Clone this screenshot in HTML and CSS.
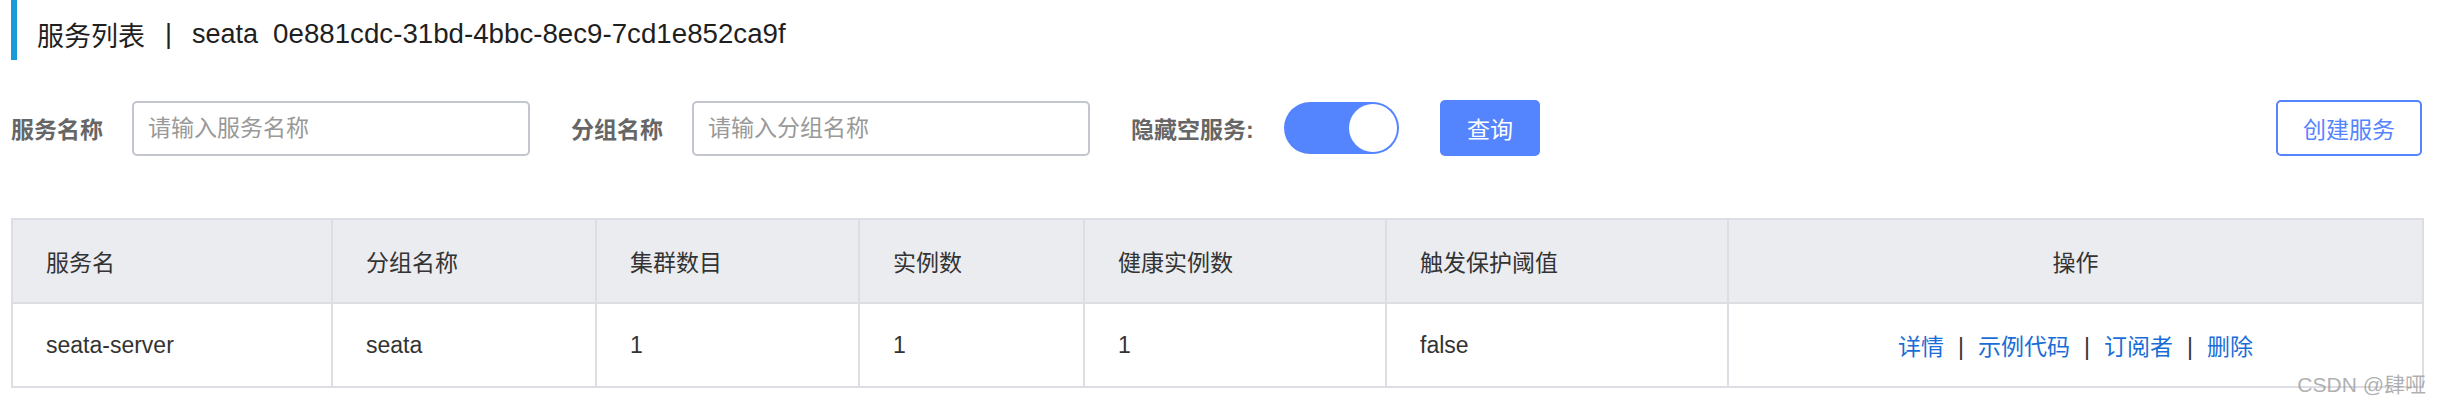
FILE: index.html
```html
<!DOCTYPE html>
<html lang="zh-CN">
<head>
    <meta charset="UTF-8">
    <title>服务列表</title>
    <link rel="stylesheet" href="styles.css">
</head>
<body>
    <div class="page">
        <div class="page-title">
            <span>服务列表</span>
            <span class="title-sep">|</span>
            <span>seata</span>
            <span class="title-ns">0e881cdc-31bd-4bbc-8ec9-7cd1e852ca9f</span>
        </div>

        <div class="search-bar">
            <div class="form-item">
                <label>服务名称</label>
                <input class="text-input" type="text" placeholder="请输入服务名称">
            </div>
            <div class="form-item">
                <label>分组名称</label>
                <input class="text-input" type="text" placeholder="请输入分组名称">
            </div>
            <div class="form-item">
                <label class="label-wide">隐藏空服务:</label>
                <span class="switch on"><span class="knob"></span></span>
            </div>
            <button class="btn btn-primary">查询</button>
            <button class="btn btn-outline btn-create">创建服务</button>
        </div>

        <table class="service-table">
            <colgroup>
                <col style="width:320px">
                <col style="width:264px">
                <col style="width:263px">
                <col style="width:225px">
                <col style="width:302px">
                <col style="width:342px">
                <col style="width:695px">
            </colgroup>
            <thead>
                <tr>
                    <th>服务名</th>
                    <th>分组名称</th>
                    <th>集群数目</th>
                    <th>实例数</th>
                    <th>健康实例数</th>
                    <th>触发保护阈值</th>
                    <th class="center">操作</th>
                </tr>
            </thead>
            <tbody>
                <tr>
                    <td>seata-server</td>
                    <td>seata</td>
                    <td>1</td>
                    <td>1</td>
                    <td>1</td>
                    <td>false</td>
                    <td class="center">
                        <a href="#">详情</a><span class="op-sep">|</span><a href="#">示例代码</a><span class="op-sep">|</span><a href="#">订阅者</a><span class="op-sep">|</span><a href="#">删除</a>
                    </td>
                </tr>
            </tbody>
        </table>

        <div class="watermark">CSDN @肆哑</div>
    </div>
</body>
</html>
```

FILE: styles.css
```css
body {
    margin: 0;
    padding: 0;
    background: #fff;
    font-family: "Liberation Sans", "Noto Sans CJK SC", sans-serif;
    color: #333;
}
.page {
    position: relative;
    width: 2411px;
    padding: 0 18px 0 11px;
    height: 400px;
}

/* title */
.page-title {
    height: 60px;
    border-left: 6px solid #1a9ad6;
    padding-left: 20px;
    padding-top: 8px;
    box-sizing: border-box;
    display: flex;
    align-items: center;
    font-size: 27px;
    color: #1f1f1f;
}
.title-sep {
    margin: 0 20px;
}
.title-ns {
    margin-left: 15px;
    font-size: 27.7px;
}

/* search bar */
.search-bar {
    display: flex;
    align-items: center;
    margin-top: 40px;
    height: 56px;
}
.form-item {
    display: flex;
    align-items: center;
    gap: 25px;
    margin-right: 41px;
}
.form-item label {
    font-size: 23px;
    font-weight: bold;
    color: #666;
    min-width: 96px;
}
.form-item .label-wide {
    min-width: 128px;
}
.text-input {
    width: 398px;
    height: 55px;
    box-sizing: border-box;
    border: 2px solid #c4c6cf;
    border-radius: 5px;
    padding: 0 14px;
    font-family: inherit;
    font-size: 23px;
    color: #333;
    outline: none;
}
.text-input::placeholder {
    color: #999;
}
.switch {
    display: inline-block;
    width: 115px;
    height: 52px;
    border-radius: 26px;
    background: #5584ff;
    position: relative;
    box-sizing: border-box;
}
.switch .knob {
    position: absolute;
    right: 2px;
    top: 2px;
    width: 48px;
    height: 48px;
    border-radius: 50%;
    background: #fff;
}
.btn {
    height: 56px;
    box-sizing: border-box;
    border-radius: 5px;
    font-family: inherit;
    font-size: 23px;
    cursor: pointer;
}
.btn-primary {
    width: 100px;
    border: none;
    background: #5584ff;
    color: #fff;
}
.btn-outline {
    background: #fff;
    border: 2px solid #5584ff;
    color: #5584ff;
}
.btn-create {
    width: 146px;
    margin-left: auto;
}

/* table */
.service-table {
    margin-top: 62px;
    width: 2411px;
    table-layout: fixed;
    border-collapse: collapse;
    font-size: 23px;
}
.service-table th,
.service-table td {
    border: 2px solid #dcdee3;
    padding: 0 0 0 33px;
    text-align: left;
    font-weight: normal;
    color: #333;
    height: 82px;
}
.service-table th {
    background: #ebecf0;
}
.service-table .center {
    text-align: center;
    padding-left: 0;
}
.service-table a {
    color: #1a6dd6;
    text-decoration: none;
}
.op-sep {
    margin: 0 14px;
    color: #333;
}

.watermark {
    position: absolute;
    right: 14px;
    top: 368px;
    font-size: 21px;
    color: rgba(150, 150, 150, 0.75);
}
```
